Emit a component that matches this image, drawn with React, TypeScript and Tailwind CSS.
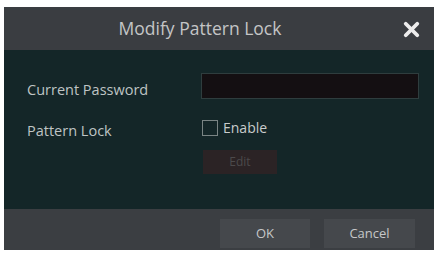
import { X } from 'lucide-react';

export default function App() {
  return (
    <div className="w-[437px] h-[254px] bg-white pt-[7px] pl-[4px]" style={{ fontFamily: '"Open Sans", sans-serif' }}>
      <div className="w-[430px] h-[243px] flex flex-col bg-[#3a3d41]">
        {/* Header */}
        <div className="h-[43px] flex items-center justify-center pr-[38px] relative">
          <span className="text-[17.5px] text-[#c4c5c6]">Modify Pattern Lock</span>
          <X className="absolute right-[11px] top-[11px] w-[23px] h-[23px] text-[#ececec]" strokeWidth={4} />
        </div>

        {/* Body */}
        <div className="h-[159px] bg-[#142628] pl-[23px] pt-[23px]">
          <div className="flex items-start h-[26px]">
            <span className="w-[174px] mt-[7px] text-[14.5px] leading-[20px] text-[#bfc4c4]">Current Password</span>
            <div className="w-[218px] h-[26px] bg-[#140f12] border border-[#2f3d3e]" />
          </div>
          <div className="flex items-center mt-[19px] h-[20px]">
            <span className="w-[175px] mt-[6px] text-[14.5px] leading-[20px] text-[#bfc4c4]">Pattern Lock</span>
            <div className="w-[16px] h-[16px] border border-[#7a8484]" />
            <span className="ml-[5px] text-[14px] leading-[20px] text-[#c9cccc]">Enable</span>
          </div>
          <div className="ml-[176px] mt-[12px] w-[74px] h-[24px] bg-[#2b2325] flex items-center justify-center">
            <span className="text-[12px] text-[#4c4a4b]">Edit</span>
          </div>
        </div>

        {/* Footer */}
        <div className="flex-1 flex items-start justify-end gap-[14px] pt-[10px] pr-[19px] bg-[#3b3e42]">
          <button className="w-[90px] h-[29px] bg-[#45484c] text-[13px] text-[#c6c7c8]">OK</button>
          <button className="w-[91px] h-[29px] bg-[#45484c] text-[13px] text-[#c6c7c8]">Cancel</button>
        </div>
      </div>
    </div>
  );
}
